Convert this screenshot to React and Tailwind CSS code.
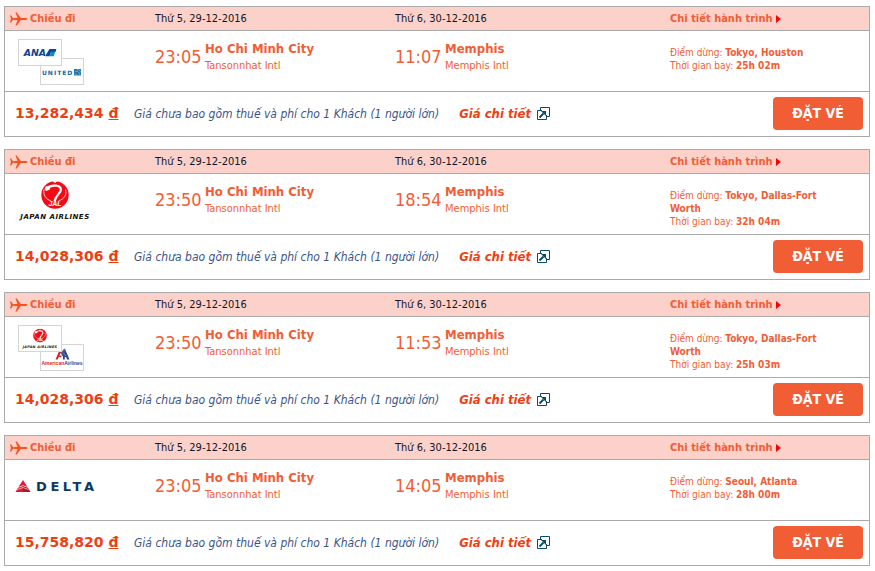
const flights = [
  {
    id: 1,
    airlines: ["ana", "united"],
    depart: "23:05",
    arrive: "11:07",
    stops: "Tokyo, Houston",
    duration: "25h 02m",
    price: "13,282,434",
  },
  {
    id: 2,
    airlines: ["jal"],
    depart: "23:50",
    arrive: "18:54",
    stops: "Tokyo, Dallas-Fort Worth",
    duration: "32h 04m",
    price: "14,028,306",
  },
  {
    id: 3,
    airlines: ["jal", "american"],
    depart: "23:50",
    arrive: "11:53",
    stops: "Tokyo, Dallas-Fort Worth",
    duration: "25h 03m",
    price: "14,028,306",
  },
  {
    id: 4,
    airlines: ["delta"],
    depart: "23:05",
    arrive: "14:05",
    stops: "Seoul, Atlanta",
    duration: "28h 00m",
    price: "15,758,820",
  },
];

const columns = "grid grid-cols-[150px_240px_1fr_199px]";

function PlaneIcon() {
  return (
    <svg width="18" height="14" viewBox="0 0 18 14" fill="#f9511d" aria-hidden="true">
      <path d="M0 3.6h1.2L3 6.2 7.6 5.8 5.4 0.4h1.3L10.8 6h4c1.6 0 2.9.6 2.9 1s-1.3 1-2.9 1h-4L6.7 13.600H5.4L7.6 8.2 3 7.8 1.2 10.4H0L1 7z" />
    </svg>
  );
}

function PopupIcon() {
  return (
    <svg width="13" height="13" viewBox="0 0 13 13" fill="none" stroke="#0b4a6b" aria-hidden="true">
      <path d="M3.5 3V.5h9V9.5H10" />
      <path d="M5 3.5H.5v9h9V8" />
      <path d="M2.5 10.5l4-4" strokeWidth="2" />
      <path d="M4 4h5v5z" fill="#0b4a6b" stroke="none" />
    </svg>
  );
}

function AnaLogo({ className }) {
  return (
    <svg className={className} viewBox="0 0 42 25" role="img" aria-label="ANA">
      <text x="2" y="17" fontFamily="DejaVu Sans" fontSize="11" fontWeight="bold" fontStyle="italic" fill="#13448f">
        ANA
      </text>
      <path d="M27 17L32 8.5h3.5L32 17z" fill="#13448f" />
      <path d="M32 17L35 8.5h5L37 17z" fill="#0a8ec4" />
      <path d="M33 8.5h7l-1 3-6 0z" fill="#13448f" />
    </svg>
  );
}

function UnitedLogo({ className }) {
  return (
    <svg className={className} viewBox="0 0 42 25" role="img" aria-label="United">
      <text x="1" y="16" fontFamily="DejaVu Sans" fontSize="6" fontWeight="bold" letterSpacing="1" fill="#12659f">
        UNITED
      </text>
      <path d="M33 10h7v6.5h-7z" fill="#1b75ad" />
      <path d="M34 12.5c3-1 4.5 1 5 4M36 10.5c2 0 3.5 1 4 3M33.5 14.5l3 2" stroke="#a9d3ea" strokeWidth=".6" fill="none" />
    </svg>
  );
}

function JalLogo({ className }) {
  return (
    <svg className={className} viewBox="0 0 72 40" role="img" aria-label="Japan Airlines">
      <circle cx="36" cy="14" r="13.7" fill="#f30a14" />
      <path
        d="M28 7.5c2-2.500 6-3.200 9.500-2.800 3.500.3 5 2.600 4 5.300-1 2.800-5 5-6 10.500"
        stroke="#fff"
        strokeWidth="2.2"
        fill="none"
      />
      <path d="M27 5l4.500 1.200-1 2.600-3.500 1.200-1.500-2z" fill="#fff" />
      <path
        d="M25 8.500c-1 5 1.500 9.500 7 11.500M46.500 8.500c1.500 5-1 9.500-7 11.500"
        stroke="#fff"
        strokeWidth=".8"
        fill="none"
      />
      <path d="M33.500 0h5l-2.500 2z" fill="#fff" />
      <text x="36" y="25" textAnchor="middle" fontFamily="Liberation Sans" fontSize="7" fontWeight="bold" fontStyle="italic" fill="#fff">
        JAL
      </text>
      <text x="36" y="38" textAnchor="middle" fontFamily="DejaVu Sans" fontSize="7" fontWeight="bold" fontStyle="italic" letterSpacing=".5" fill="#111">
        JAPAN AIRLINES
      </text>
    </svg>
  );
}

function AmericanLogo({ className }) {
  return (
    <svg className={className} viewBox="0 0 42 25" role="img" aria-label="American Airlines">
      <path d="M14.500 14.500L18.500 5h2l.8 2v2l-1.800-1-2.800 6.500z" fill="#d8232f" />
      <path d="M17.500 10.500h3v1.500h-3.500z" fill="#d8232f" />
      <path d="M22 14.500V7l1-2h1.500l4 9.500h-2.400l-2.300-6v6z" fill="#2a4a8c" />
      <path d="M22.500 10.500h3l.5 1.500h-3.500z" fill="#2a4a8c" />
      <path d="M18.500 3.500l2 .8 1 2 1-2 2-.8-1 5-2 3-1.500-3z" fill="#44619c" />
      <text x="21" y="19.5" textAnchor="middle" fontFamily="Liberation Sans" fontSize="5" fontWeight="bold" fill="#d8232f">
        American<tspan fill="#2a4a8c">Airlines</tspan>
      </text>
    </svg>
  );
}

function DeltaLogo({ className }) {
  return (
    <svg className={className} viewBox="0 0 82 20" role="img" aria-label="Delta">
      <path d="M8 4l4.500 7L8 9.300 3.500 11z" fill="#e51937" />
      <path d="M3 11.800l5-1.700V16H.5z" fill="#e51937" />
      <path d="M13 11.800l-5-1.700V16h7.500z" fill="#a6192e" />
      <path d="M2.500 13.500l5.500-2 5.500 2" stroke="#fff" strokeWidth=".6" fill="none" />
      <text x="21" y="15" fontFamily="DejaVu Sans" fontSize="13" fontWeight="bold" letterSpacing="3.600" fill="#0b3a5e">
        DELTA
      </text>
    </svg>
  );
}

const logos = {
  ana: AnaLogo,
  united: UnitedLogo,
  jal: JalLogo,
  american: AmericanLogo,
  delta: DeltaLogo,
};

function AirlineLogos({ airlines }) {
  if (airlines.length === 1) {
    const Logo = logos[airlines[0]];
    return (
      <div className="pl-[10px] pt-[7px]">
        <Logo className={airlines[0] === "delta" ? "mt-[9px] h-5 w-[82px]" : "ml-1 h-10 w-[72px]"} />
      </div>
    );
  }

  const [First, Second] = airlines.map((code) => logos[code]);
  return (
    <div className="relative ml-[13px] mt-2 h-[46px] w-[66px]">
      <div className="absolute left-0 top-0 z-10 h-[27px] w-11 border border-[#d5d5d5] bg-white px-[3px]">
        <First className="h-full w-full" />
      </div>
      <div className="absolute bottom-0 right-0 h-[27px] w-11 border border-[#d5d5d5] bg-white">
        <Second className="h-full w-full" />
      </div>
    </div>
  );
}

function Airport({ time, city, name }) {
  return (
    <div className="flex pt-[10px]">
      <span className="w-[50px] pt-1 text-[18px] leading-6">{time}</span>
      <div>
        <p className="text-[13px] font-bold leading-4">{city}</p>
        <p className="text-[11px] leading-[18px]">{name}</p>
      </div>
    </div>
  );
}

function FlightCard({ flight }) {
  return (
    <article className="border border-[#aaa] bg-white text-[#f15d35]">
      <header className={`${columns} h-6 items-center border-b border-[#aaa] bg-[#fbd1c9] text-[11px] leading-4 text-[#151525]`}>
        <h2 className="flex items-center gap-[2px] pl-[5px] font-bold text-[#f15d35]">
          <PlaneIcon />
          Chiều đi
        </h2>
        <span>Thứ 5, 29-12-2016</span>
        <span>Thứ 6, 30-12-2016</span>
        <a href="#" className="flex items-center gap-[3px] font-bold text-[#f15d35]">
          Chi tiết hành trình
          <svg width="5" height="8" viewBox="0 0 5 8" fill="#f00" className="mt-px" aria-hidden="true">
            <path d="M0 0l5 4-5 4z" />
          </svg>
        </a>
      </header>

      <div className={`${columns} min-h-[61px] border-b border-[#aaa]`}>
        <AirlineLogos airlines={flight.airlines} />
        <Airport time={flight.depart} city="Ho Chi Minh City" name="Tansonnhat Intl" />
        <Airport time={flight.arrive} city="Memphis" name="Memphis Intl" />
        <div className="pr-10 pt-[15px] text-[10px] leading-[13px]">
          <p>
            Điểm dừng: <b>{flight.stops}</b>
          </p>
          <p>
            Thời gian bay: <b>{flight.duration}</b>
          </p>
        </div>
      </div>

      <footer className="flex h-11 items-center pb-px pl-[10px] pr-[6px]">
        <strong className="w-[119px] font-['DejaVu_Sans',sans-serif] text-[14px] text-[#ee3f14]">
          {flight.price} <span className="underline">đ</span>
        </strong>
        <em className="text-[12px] text-[#3b5588]">Giá chưa bao gồm thuế và phí cho 1 Khách (1 người lớn)</em>
        <a href="#" className="ml-5 flex items-center gap-[6px] text-[13px] font-bold italic text-[#ee3f14]">
          Giá chi tiết
          <PopupIcon />
        </a>
        <button type="button" className="ml-auto h-[33px] w-[90px] rounded-[4px] bg-[#f15d35] text-[14px] font-bold text-white">
          ĐẶT VÉ
        </button>
      </footer>
    </article>
  );
}

export default function App() {
  return (
    <main className="flex flex-col gap-3 bg-white pb-1 pl-1 pr-[5px] pt-[6px] font-['DejaVu_Sans_Condensed','DejaVu_Sans',sans-serif]">
      {flights.map((flight) => (
        <FlightCard key={flight.id} flight={flight} />
      ))}
    </main>
  );
}
